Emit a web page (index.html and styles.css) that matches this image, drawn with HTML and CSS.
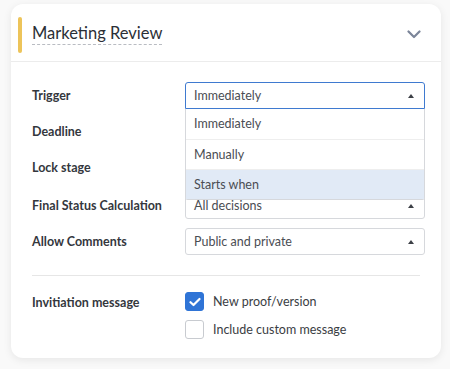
FILE: index.html
```html
<!DOCTYPE html>
<html lang="en">
<head>
  <meta charset="UTF-8" />
  <title>Marketing Review</title>
  <link rel="stylesheet" href="styles.css">
</head>
<body>

<div class="card">
  <div class="card-head">
    <span class="mark"></span>
    <h2 class="title">Marketing Review</h2>
    <svg class="chevron" width="14" height="9" viewBox="0 0 14 9">
      <path d="M1.5 1.5 L7 7 L12.5 1.5" fill="none" stroke="#7b8599" stroke-width="2.2" stroke-linecap="round" stroke-linejoin="round"/>
    </svg>
  </div>

  <div class="card-body">
    <div class="row">
      <label>Trigger</label>
      <div class="select open">
        <div class="select-box active">Immediately <span class="caret"></span></div>
        <ul class="menu">
          <li>Immediately</li>
          <li>Manually</li>
          <li class="hover">Starts when</li>
        </ul>
      </div>
    </div>
    <!-- these two sit under the open menu -->
    <div class="row">
      <label>Deadline</label>
      <div class="select"><div class="select-box"><span></span><span class="caret"></span></div></div>
    </div>
    <div class="row gap-after">
      <label>Lock stage</label>
      <div class="select"><div class="select-box"><span></span><span class="caret"></span></div></div>
    </div>
    <div class="row">
      <label>Final Status Calculation</label>
      <div class="select"><div class="select-box">All decisions <span class="caret"></span></div></div>
    </div>
    <div class="row">
      <label>Allow Comments</label>
      <div class="select"><div class="select-box">Public and private <span class="caret"></span></div></div>
    </div>

    <hr class="divider">

    <div class="row top">
      <label>Invitiation message</label>
      <div class="checks">
        <div class="check">
          <span class="box checked">
            <svg width="12" height="10" viewBox="0 0 12 10"><path d="M1.5 5.2 L4.5 8 L10.5 2" fill="none" stroke="#fff" stroke-width="2.2" stroke-linecap="round" stroke-linejoin="round"/></svg>
          </span>
          New proof/version
        </div>
        <div class="check">
          <span class="box"></span>
          Include custom message
        </div>
      </div>
    </div>
  </div>
</div>

</body>
</html>
```

FILE: styles.css
```css
* {
  margin: 0; padding: 0; box-sizing: border-box;
  font-family: 'Lato', sans-serif;
}

body {
  background: #f9f9f9;
  padding: 4px 9px 11px 11px;
}

.card {
  width: 430px;
  height: 354px;
  background: white;
  border-radius: 12px;
  box-shadow: 0 2px 8px rgba(0,0,0,0.08);
}

.card-head {
  display: flex;
  align-items: center;
  height: 58px;
  padding: 0 20px 0 7px;
  border-bottom: 1px solid #ececec;
}

.mark {
  width: 4px;
  height: 36px;
  border-radius: 2px;
  background: #edc45a;
  margin-top: 4px;
  margin-right: 10px;
}

.title {
  flex: 1;
  font-size: 16.5px;
  font-weight: 400;
  color: #2b2f36;
  text-decoration: underline dashed #b9bcc2;
  text-underline-offset: 5px;
  text-decoration-thickness: 1px;
}

.chevron { margin-top: 4px; }

.card-body {
  padding: 20px 16px 0 21px;
}

.row {
  display: flex;
  align-items: center;
  height: 27px;
  margin-bottom: 9px;
}

.row.gap-after { margin-bottom: 11px; }

.row label {
  width: 153px;
  font-size: 12.5px;
  font-weight: 700;
  color: #34373d;
}

.select {
  position: relative;
  flex: 1;
}

.select-box {
  display: flex;
  align-items: center;
  justify-content: space-between;
  height: 27px;
  padding: 0 10px 0 8px;
  border: 1px solid #d6d8dc;
  border-radius: 3px;
  font-size: 12.5px;
  color: #4a4d53;
}

.select-box.active {
  border-color: #3f7ad0;
  border-bottom-left-radius: 0;
  border-bottom-right-radius: 0;
}

.caret {
  width: 0; height: 0;
  border-left: 3.5px solid transparent;
  border-right: 3.5px solid transparent;
  border-bottom: 4px solid #3d4046;
}

.menu {
  position: absolute;
  left: 0; right: 0; top: 27px;
  list-style: none;
  background: white;
  border: 1px solid #d6d8dc;
  border-top: none;
  border-radius: 0 0 3px 3px;
  z-index: 2;
}

.menu li {
  height: 30px;
  line-height: 30px;
  padding: 0 8px;
  font-size: 12.5px;
  color: #4a4d53;
  border-top: 1px solid #eeeeee;
}

.menu li:first-child { border-top: none; }

.menu li.hover { background: #e1eaf6; }

.divider {
  border: none;
  border-top: 1px solid #e6e6e6;
  margin: 20px 5px 16px 0;
}

.row.top {
  align-items: flex-start;
  height: auto;
}

.row.top label { margin-top: 3px; }

.checks {
  display: flex;
  flex-direction: column;
  gap: 9px;
}

.check {
  display: flex;
  align-items: center;
  gap: 9px;
  font-size: 12.5px;
  color: #3a3d43;
}

.box {
  display: flex;
  align-items: center;
  justify-content: center;
  width: 19px;
  height: 19px;
  border: 1px solid #c8cbd0;
  border-radius: 3px;
}

.box.checked {
  background: #2f74d6;
  border-color: #2f74d6;
}
```
